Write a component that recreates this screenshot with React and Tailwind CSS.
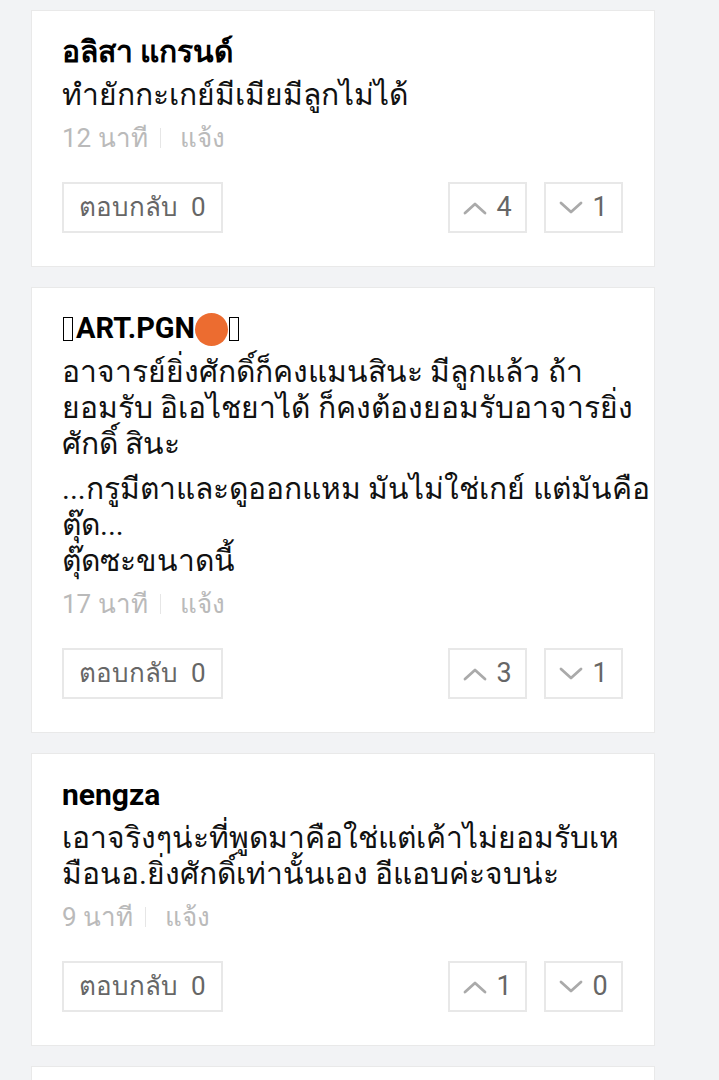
import React from 'react';

const COMMENTS = [
  {
    name: 'อลิสา แกรนด์',
    lines: ['ทำยักกะเกย์มีเมียมีลูกไม่ได้'],
    time: '12 นาที',
    replies: 0,
    up: 4,
    down: 1,
  },
  {
    name: 'art',
    lines: [
      'อาจารย์ยิ่งศักดิ์ก็คงแมนสินะ มีลูกแล้ว ถ้า',
      'ยอมรับ อิเอไชยาได้ ก็คงต้องยอมรับอาจารยิ่ง',
      'ศักดิ์ สินะ',
      '...กรูมีตาและดูออกแหม มันไม่ใช่เกย์ แต่มันคือ',
      'ตุ๊ด...',
      'ตุ๊ดซะขนาดนี้',
    ],
    breakAt: 3,
    time: '17 นาที',
    replies: 0,
    up: 3,
    down: 1,
  },
  {
    name: 'nengza',
    lines: [
      'เอาจริงๆน่ะที่พูดมาคือใช่แต่เค้าไม่ยอมรับเห',
      'มือนอ.ยิ่งศักดิ์เท่านั้นเอง อีแอบค่ะจบน่ะ',
    ],
    time: '9 นาที',
    replies: 0,
    up: 1,
    down: 0,
  },
];

const Tofu = () => (
  <span className="inline-block w-[10px] h-[24px] border border-black mx-[1px]" />
);

const Chevron = ({ down }) => (
  <svg width="24" height="14" viewBox="0 0 24 14" fill="none">
    <path
      d={down ? 'M2 2 L12 11 L22 2' : 'M2 12 L12 3 L22 12'}
      stroke="#aaaaaa"
      strokeWidth="2.8"
      strokeLinecap="round"
      strokeLinejoin="round"
    />
  </svg>
);

const Name = ({ name }) => {
  if (name === 'art') {
    return (
      <div className="flex items-center h-[36px] text-[29px] font-bold text-black">
        <Tofu />
        <span className="ml-[2px]">ART.PGN</span>
        <span className="inline-block w-[33px] h-[33px] rounded-full bg-[#ec6c30]" />
        <Tofu />
      </div>
    );
  }
  return <div className="h-[36px] leading-[36px] text-[30px] font-bold text-black">{name}</div>;
};

const VoteBox = ({ down, n }) => (
  <div className="w-[79px] h-[51px] flex items-center justify-center gap-[9px] border-2 border-[#e8e8e8] text-[27px] text-[#666]">
    <Chevron down={down} />
    <span>{n}</span>
  </div>
);

const Comment = ({ c }) => (
  <div className="bg-white border border-[#e9e9e9] pt-[23px] pb-[33px] pl-[30px] pr-[31px]">
    <Name name={c.name} />
    <div className="mt-[7px] text-[30px] leading-[36px] text-[#111]">
      {c.lines.map((l, i) => (
        <div key={i} className={`whitespace-nowrap ${i === c.breakAt ? 'mt-[9px]' : ''}`}>
          {l}
        </div>
      ))}
    </div>
    <div className="mt-[7px] flex items-center h-[36px] text-[26px] text-[#bababa]">
      <span>{c.time}</span>
      <span className="ml-[12px] mr-[19px] w-px h-[20px] bg-[#e6e6e6]" />
      <span>แจ้ง</span>
    </div>
    <div className="mt-[26px] flex items-center">
      <div className="h-[51px] px-[15px] flex items-center border-2 border-[#e8e8e8] text-[26px] text-[#666]">
        ตอบกลับ&nbsp;&nbsp;{c.replies}
      </div>
      <div className="ml-auto flex gap-[17px]">
        <VoteBox n={c.up} />
        <VoteBox down n={c.down} />
      </div>
    </div>
  </div>
);

export default function App() {
  return (
    <div
      className="h-[1080px] overflow-hidden bg-[#f2f3f5] pt-[10px] pl-[31px] pr-[64px] flex flex-col gap-[20px]"
      style={{ fontFamily: 'Roboto, "Noto Sans", sans-serif' }}
    >
      {COMMENTS.map((c, i) => (
        <Comment key={i} c={c} />
      ))}
      <div className="bg-white border border-[#e9e9e9] h-[200px] shrink-0" />
    </div>
  );
}
